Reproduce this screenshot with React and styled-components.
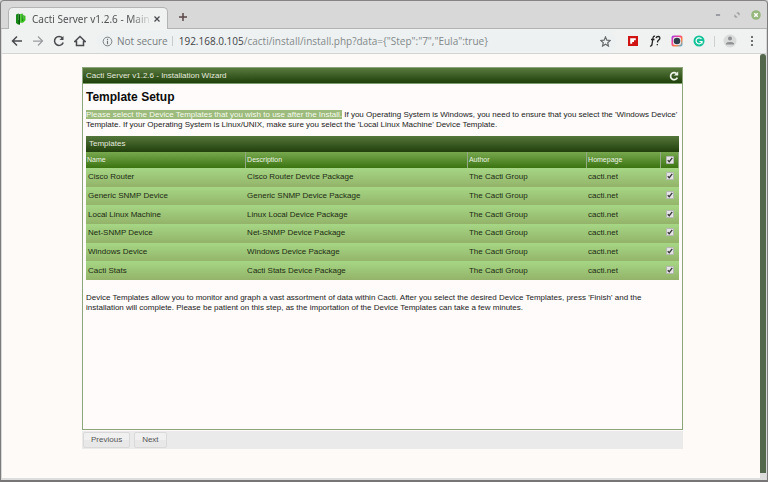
import React from "react";
import styled, { createGlobalStyle } from "styled-components";

const Global = createGlobalStyle`
  *, *::before, *::after { box-sizing: border-box; }
  body { margin: 0; background: #d8d8d8; }
  button, input { font: inherit; margin: 0; }
`;

const Window = styled.div`
  display: flex;
  flex-direction: column;
  min-height: 100vh;
  border: 1px solid #7c7c7c;
  border-top-color: #858383;
  border-bottom: 2px solid #777575;
  border-radius: 4px 4px 0 0;
  background: #d8d8d8;
  font-family: "Liberation Sans", Arial, sans-serif;
  font-size: 8px;
  line-height: 10px;
  color: #222;
`;

const TabStrip = styled.header`
  display: flex;
  align-items: flex-end;
  height: 28px;
  padding-left: 7px;
  border-bottom: 1px solid #b3b3b3;
  font-family: "Noto Sans", sans-serif;
`;

const Tab = styled.div`
  display: flex;
  align-items: center;
  width: 160px;
  height: 22px;
  margin-bottom: -1px;
  padding: 0 5px 0 6px;
  border: 1px solid #b3b3b3;
  border-bottom: 0;
  border-radius: 5px 5px 0 0;
  background: #f0f1f1;
`;

const TabTitle = styled.span`
  flex: 1;
  margin-left: 6px;
  overflow: hidden;
  white-space: nowrap;
  font-size: 10px;
  line-height: 16px;
  color: #505354;
  mask-image: linear-gradient(to right, #000 82%, transparent);
`;

const IconButton = styled.button`
  display: grid;
  place-items: center;
  width: ${(p) => p.$size || 14}px;
  height: ${(p) => p.$size || 14}px;
  padding: 0;
  border: 0;
  background: none;
  color: ${(p) => p.$color || "#484b4d"};
`;

const NewTab = styled(IconButton)`
  margin: 0 0 4px 8px;
`;

const WindowControls = styled.div`
  display: flex;
  gap: 5px;
  margin: 0 4px 6px auto;
`;

const Toolbar = styled.nav`
  display: flex;
  align-items: center;
  height: 25px;
  margin: 0 1px;
  padding: 0 7px 0 8px;
  border-bottom: 1px solid #d3d4d4;
  background: #f0f1f1;
  font-family: "Open Sans", "Noto Sans", sans-serif;
  font-size: 10px;
`;

const NavGroup = styled.div`
  display: flex;
  gap: 7px;
`;

const Address = styled.div`
  display: flex;
  flex: 1;
  align-items: center;
  height: 20px;
  margin: 0 9px 0 10px;
  padding: 0 6px 0 4px;
  border-radius: 10px;
  background: #edf1f1;
`;

const Security = styled.span`
  margin-left: 4px;
  padding-right: 4px;
  border-right: 1px solid #c9cccc;
  white-space: nowrap;
  color: #777d80;
`;

const UrlText = styled.span`
  flex: 1;
  margin-left: 6px;
  white-space: nowrap;
  color: #83898b;
`;

const Host = styled.span`
  color: #3f4345;
`;

const Extensions = styled.div`
  display: flex;
  align-items: center;
  gap: 8px;
`;

const Divider = styled.span`
  width: 1px;
  height: 11px;
  background: #cfcfcf;
`;

const Viewport = styled.div`
  display: flex;
  flex: 1;
  margin: 0 1px;
  border-bottom: 2px solid #dedddd;
  background: #fefaf8;
`;

const Page = styled.main`
  flex: 1;
  padding: 13px 77px 28px 80px;
`;

const ScrollTrack = styled.div`
  display: flex;
  width: 6px;
  padding-bottom: 5px;
  background: #dcdcdc;
`;

const ScrollThumb = styled.div`
  flex: 1;
  border-radius: 3px 3px 0 0;
  background: #52674b;
`;

const Wizard = styled.section`
  min-height: calc(100vh - 119px);
  border: 1px solid #8da57b;
  background: #fefbfa;
`;

const TitleBar = styled.div`
  display: flex;
  align-items: center;
  justify-content: space-between;
  height: 16px;
  padding: 0 3px;
  border-bottom: 1px solid #7f9d69;
  background: linear-gradient(#587a3e, #20400b);
  color: #e5eadf;
`;

const Body = styled.div`
  padding: 6px 3px;
`;

const Heading = styled.h1`
  margin: 0 0 6px;
  font-size: 12px;
  line-height: 14px;
  color: #0c0c0c;
`;

const Text = styled.p`
  margin: 0;
  line-height: 10px;
`;

const Highlight = styled.mark`
  background: #9dbb7c;
  color: #f5faef;
`;

const TablePanel = styled.section`
  margin: 6px 0 13px;
`;

const TableTitle = styled.h2`
  margin: 0;
  padding: 0 3px;
  background: linear-gradient(#55763b, #21400c);
  font-size: 8px;
  font-weight: 400;
  line-height: 16px;
  color: #e5eadf;
`;

const Table = styled.table`
  width: 100%;
  height: 128px;
  table-layout: fixed;
  border-spacing: 0;
`;

const Col = styled.col`
  width: ${(p) => p.$width};
`;

const HeadRow = styled.tr`
  height: 16px;
  background: linear-gradient(#78a84f, #3b7411);
`;

const HeadCell = styled.th`
  padding: ${(p) => (p.$center ? "0" : "0 1px")};
  border-right: 1px solid #93a983;
  text-align: ${(p) => (p.$center ? "center" : "left")};
  font-size: 7px;
  font-weight: 400;
  color: #e9f2e1;
`;

const Row = styled.tr`
  background: linear-gradient(#a6d785, #93b369);
`;

const Cell = styled.td`
  padding: ${(p) => (p.$center ? "0 1px 2px 0" : "0 1px")};
  text-align: ${(p) => (p.$center ? "center" : "left")};
  color: #1c2b12;

  &:first-child { padding-left: 2px; }
`;

const Check = styled.input`
  display: block;
  appearance: none;
  width: 8px;
  height: 8px;
  margin: 0 auto;
  border: 1px solid #b5b8b2;
  border-radius: 1px;
  background: #e4e4e6;

  &:checked {
    background: #e4e4e6 url("data:image/svg+xml,%3Csvg xmlns='http://www.w3.org/2000/svg' viewBox='0 0 8 8'%3E%3Cpath d='M1 4.2 3 6.2 7 1.2' fill='none' stroke='%23383838' stroke-width='1.8'/%3E%3C/svg%3E") center / 100%;
  }
`;

const Actions = styled.div`
  display: flex;
  gap: 4px;
  margin-top: 1px;
  padding: 1px;
  background: #eaeaea;
`;

const ActionButton = styled.button`
  height: 16px;
  padding: 0 7px;
  border: 1px solid #d9d9d9;
  border-radius: 2px;
  background: linear-gradient(#f0f0f0 50%, #e8e8e8 50%);
  line-height: 12px;
  color: #555;
`;

const Stroke = ({ size = 12, width = 2, children }) => (
  <svg width={size} height={size} viewBox="0 0 24 24" fill="none" stroke="currentColor" strokeWidth={width}>
    {children}
  </svg>
);

const CactusLogo = () => (
  <svg width="11" height="12" viewBox="0 0 11 12">
    <path d="M1 1.5 3.5.5V7H5V11.5H3L1 10Z" fill="#168b16" />
    <path d="M3.5.5 5 1.5V11.5L3.5 11Z" fill="#075c0c" />
    <path d="M5.2 1 7.6.4V6.2H8.3V2L10.5 3V7.2L8 9.7H5.2Z" fill="#3cc321" />
    <path d="M7.6.4 8.3 2V7L7 8.5Z" fill="#178319" />
  </svg>
);

const templates = [
  ["Cisco Router", "Cisco Router Device Package"],
  ["Generic SNMP Device", "Generic SNMP Device Package"],
  ["Local Linux Machine", "Linux Local Device Package"],
  ["Net-SNMP Device", "Net-SNMP Device Package"],
  ["Windows Device", "Windows Device Package"],
  ["Cacti Stats", "Cacti Stats Device Package"],
];

function BrowserChrome() {
  return (
    <>
      <TabStrip>
        <Tab>
          <CactusLogo />
          <TabTitle>Cacti Server v1.2.6 - Main</TabTitle>
          <IconButton aria-label="Close tab" $size={10}>
            <Stroke size={10} width={3}><path d="m6 6 12 12M18 6 6 18" /></Stroke>
          </IconButton>
        </Tab>
        <NewTab aria-label="New tab" $color="#5b4648">
          <Stroke size={12} width={3}><path d="M12 4v16M4 12h16" /></Stroke>
        </NewTab>
        <WindowControls>
          <IconButton aria-label="Minimize" $color="#777986">
            <Stroke size={10} width={3}><path d="M7 12h10" /></Stroke>
          </IconButton>
          <IconButton aria-label="Restore" $color="#8c8d8f">
            <Stroke size={6} width={4}><path d="M11 4h9v9M4 11v9h9" /></Stroke>
          </IconButton>
          <IconButton aria-label="Close window">
            <svg width="10" height="10" viewBox="0 0 10 10">
              <circle cx="5" cy="5" r="4.8" fill="#96b77e" />
              <path d="m3.3 3.3 3.4 3.4m0-3.4L3.3 6.7" stroke="#fff" strokeWidth="1.5" />
            </svg>
          </IconButton>
        </WindowControls>
      </TabStrip>
      <Toolbar>
        <NavGroup>
          <IconButton aria-label="Back"><Stroke><path d="M22 12H4M12 3l-9 9 9 9" strokeWidth="3" /></Stroke></IconButton>
          <IconButton aria-label="Forward" $color="#9a9d9f"><Stroke><path d="M2 12h18M12 3l9 9-9 9" strokeWidth="2.5" /></Stroke></IconButton>
          <IconButton aria-label="Reload"><Stroke width={3}><path d="M19 6a9 9 0 1 0 1.5 9" /><path d="M21 2v8h-8z" fill="currentColor" stroke="none" /></Stroke></IconButton>
          <IconButton aria-label="Home"><Stroke width={3}><path d="M1.5 13 12 3l10.500 10H19v8H5v-8z" /></Stroke></IconButton>
        </NavGroup>
        <Address>
          <IconButton aria-label="Site information" $size={12} $color="#707578">
            <Stroke size={11}><circle cx="12" cy="12" r="9.5" /><path d="M12 11v7M12 6v3" strokeWidth="2.5" /></Stroke>
          </IconButton>
          <Security>Not secure</Security>
          <UrlText><Host>192.168.0.105</Host>/cacti/install/install.php?data={'{"Step":"7","Eula":true}'}</UrlText>
          <IconButton aria-label="Bookmark" $size={12} $color="#66696b">
            <Stroke size={11} width={2.5}><path d="m12 2 3 7 7.5.7-5.7 5 1.700 7.300-6.500-4-6.500 4 1.700-7.300-5.700-5L9 9z" /></Stroke>
          </IconButton>
        </Address>
        <Extensions>
          <IconButton aria-label="Flipboard">
            <svg width="10" height="10" viewBox="0 0 10 10"><path d="M0 0h10v10H0z" fill="#d01313" /><path d="M2.2 2.2h5.6v2H6v1.8H4.2v1.8h-2z" fill="#fff" /></svg>
          </IconButton>
          <IconButton aria-label="Font finder">
            <svg width="12" height="12" viewBox="0 0 12 12" fill="none" stroke="#252525" strokeWidth="1.3">
              <path d="M6 1.4C4.6.7 4.1 2 3.9 3.5L3 9.5Q2.6 11.4 1 11M2 4.5h3.5M7 3.2Q7.5 1.3 9.4 1.5T10.7 4L8.6 6.2V7.5M8.3 8.9v1.3" />
            </svg>
          </IconButton>
          <IconButton aria-label="Camera">
            <svg width="12" height="12" viewBox="0 0 12 12">
              <defs><linearGradient id="lens" x1="0" y1="0" x2="1" y2="1"><stop stopColor="#9747e8" /><stop offset=".35" stopColor="#ee3b9d" /><stop offset=".65" stopColor="#ff853f" /><stop offset="1" stopColor="#39b9f0" /></linearGradient></defs>
              <rect x=".5" y=".5" width="11" height="11" rx="2" fill="url(#lens)" />
              <rect x="2" y="2" width="8" height="8" rx="2" fill="#f6e9f2" />
              <circle cx="6" cy="6" r="3.3" fill="#2d3f4b" />
            </svg>
          </IconButton>
          <IconButton aria-label="Grammar">
            <svg width="12" height="12" viewBox="0 0 12 12" fill="none" stroke="#fff" strokeWidth="1.2"><circle cx="6" cy="6" r="5.5" fill="#15c39a" stroke="none" /><path d="M8.5 4A3 3 0 1 0 9 6.5H6.5M9 6.5v2" /></svg>
          </IconButton>
          <Divider />
          <IconButton aria-label="Profile">
            <svg width="14" height="14" viewBox="0 0 14 14"><circle cx="7" cy="7" r="6.5" fill="#d9dada" /><circle cx="7" cy="4.5" r="2" fill="#8d9091" /><path d="M3 10.5V9.3Q4 8 7 8t4 1.3v1.2z" fill="#8d9091" /></svg>
          </IconButton>
          <IconButton aria-label="Menu">
            <svg width="12" height="12" viewBox="0 0 12 12" fill="#505253"><circle cx="6" cy="2" r="1.1" /><circle cx="6" cy="6" r="1.1" /><circle cx="6" cy="10" r="1.1" /></svg>
          </IconButton>
        </Extensions>
      </Toolbar>
    </>
  );
}

function TemplateTable() {
  return (
    <TablePanel>
      <TableTitle>Templates</TableTitle>
      <Table>
        <colgroup>
          <Col $width="27%" />
          <Col $width="37.4%" />
          <Col $width="20.1%" />
          <Col />
          <Col $width="18px" />
        </colgroup>
        <thead>
          <HeadRow>
            <HeadCell>Name</HeadCell>
            <HeadCell>Description</HeadCell>
            <HeadCell>Author</HeadCell>
            <HeadCell>Homepage</HeadCell>
            <HeadCell $center><Check type="checkbox" aria-label="Select all" defaultChecked /></HeadCell>
          </HeadRow>
        </thead>
        <tbody>
          {templates.map(([name, description]) => (
            <Row key={name}>
              <Cell>{name}</Cell>
              <Cell>{description}</Cell>
              <Cell>The Cacti Group</Cell>
              <Cell>cacti.net</Cell>
              <Cell $center><Check type="checkbox" aria-label={name} defaultChecked /></Cell>
            </Row>
          ))}
        </tbody>
      </Table>
    </TablePanel>
  );
}

export default function App() {
  return (
    <Window>
      <Global />
      <BrowserChrome />
      <Viewport>
        <Page>
          <Wizard>
            <TitleBar>
              <span>Cacti Server v1.2.6 - Installation Wizard</span>
              <IconButton aria-label="Refresh" $size={10} $color="#f0f5eb">
                <Stroke size={10} width={4}><path d="M18 6a8.5 8.5 0 1 0 2 10" /><path d="M22 1v10H12z" fill="currentColor" stroke="none" /></Stroke>
              </IconButton>
            </TitleBar>
            <Body>
              <Heading>Template Setup</Heading>
              <Text>
                <Highlight>Please select the Device Templates that you wish to use after the Install.</Highlight>{" "}
                If you Operating System is Windows, you need to ensure that you select the 'Windows Device' Template. If your Operating System is Linux/UNIX, make sure you select the 'Local Linux Machine' Device Template.
              </Text>
              <TemplateTable />
              <Text>
                Device Templates allow you to monitor and graph a vast assortment of data within Cacti. After you select the desired Device Templates, press 'Finish' and the installation will complete. Please be patient on this step, as the importation of the Device Templates can take a few minutes.
              </Text>
            </Body>
          </Wizard>
          <Actions>
            <ActionButton type="button">Previous</ActionButton>
            <ActionButton type="button">Next</ActionButton>
          </Actions>
        </Page>
        <ScrollTrack><ScrollThumb /></ScrollTrack>
      </Viewport>
    </Window>
  );
}
